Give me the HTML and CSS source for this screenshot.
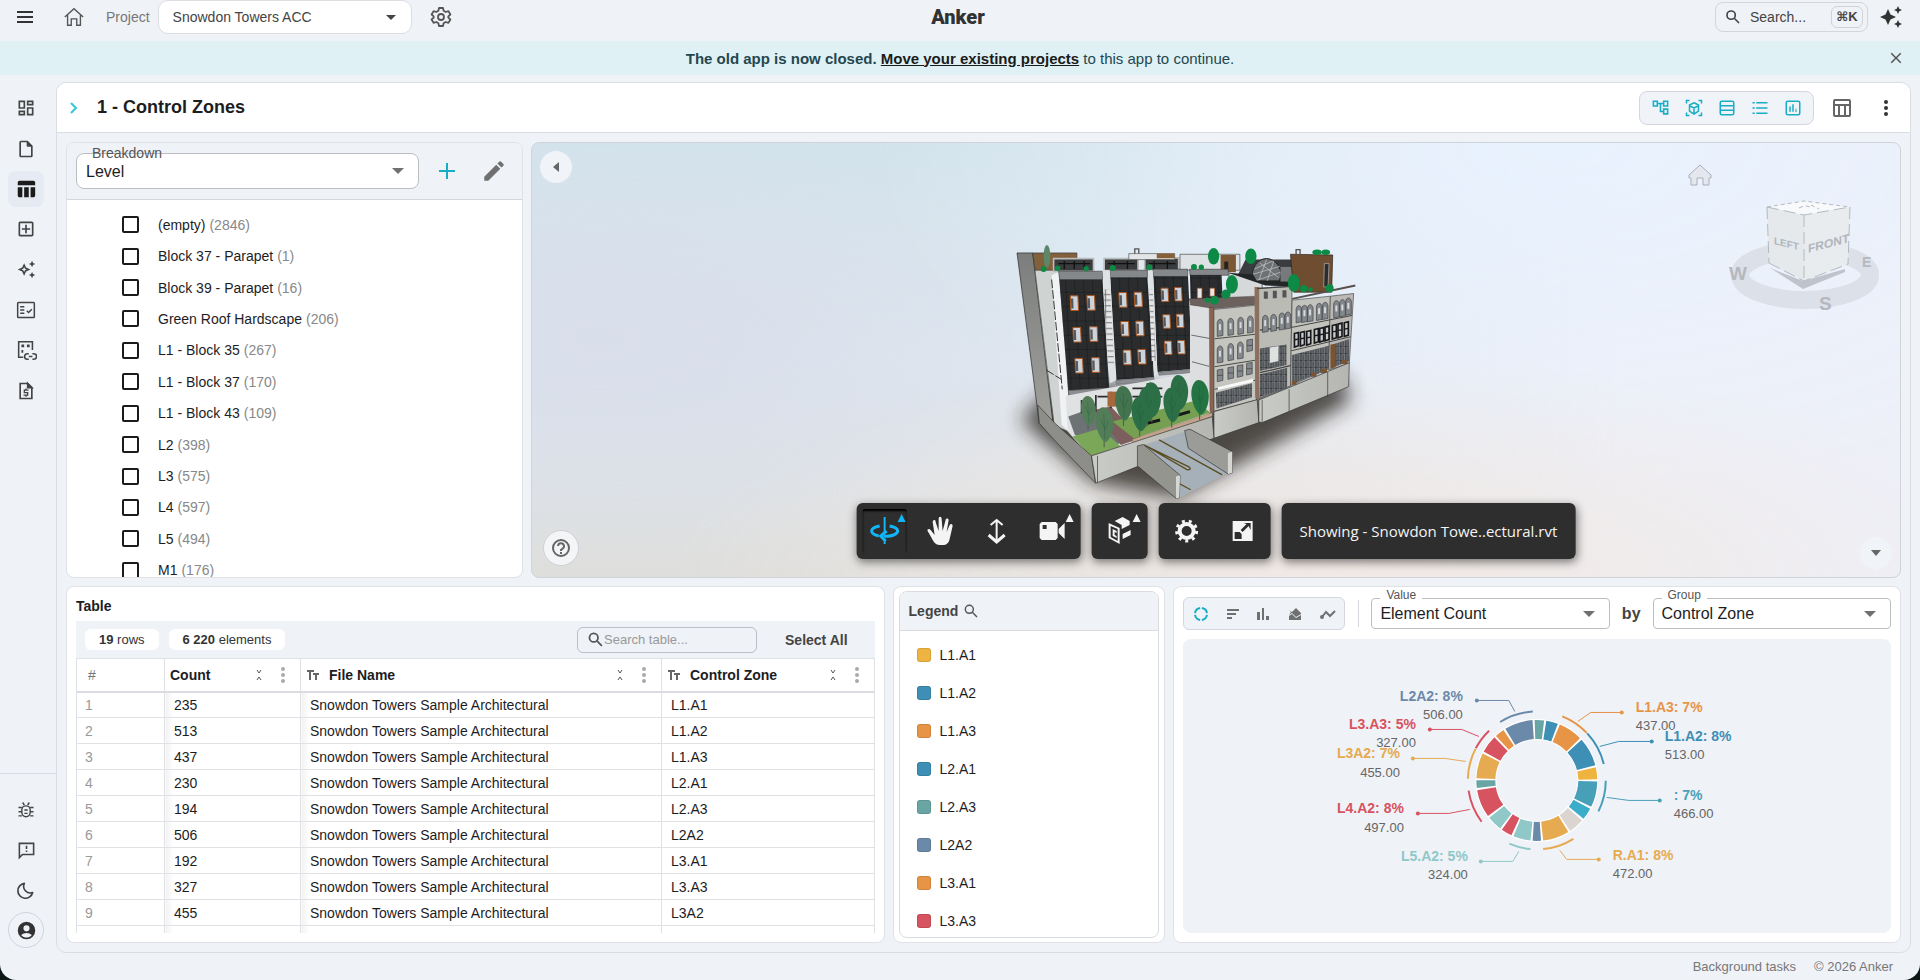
FILE: index.html
```html
<!DOCTYPE html>
<html lang="en">

<head>
    <meta charset="utf-8">
    <title>Anker - Control Zones</title>
    <link rel="stylesheet" href="styles.css">
</head>

<body>
    <header class="topbar">
        <div class="topbar-side">
            <button class="icon-btn menu-btn" aria-label="Menu"><svg width="24" height="24" viewBox="0 0 24 24"><path d="M4 6h16v2H4zM4 11h16v2H4zM4 16h16v2H4z"/></svg></button>
            <a href="#" class="icon-btn home-link" aria-label="Home"><svg width="22" height="22" viewBox="0 0 24 24" fill="none" stroke="currentColor" stroke-width="1.5"><path d="M2 12 12 3l10 9M5 10v11h4v-7h6v7h4V10"/></svg></a>
            <label class="project-label" for="project">Project</label>
            <span class="select project-select">
                <select id="project"><option>Snowdon Towers ACC</option></select>
            </span>
            <button class="icon-btn gear-btn" aria-label="Project settings"><svg width="24" height="24" viewBox="0 0 24 24" fill="none" stroke="currentColor" stroke-width="1.8" stroke-linejoin="round"><path d="M10 3h4l.6 2.8 2.1 1.2 2.7-.9 2 3.4-2.1 1.9v1.2l2.1 1.9-2 3.4-2.7-.9-2.1 1.2L14 21h-4l-.6-2.8L7.3 17l-2.7.9-2-3.4 2.1-1.9v-1.2L2.6 9.5l2-3.4 2.7.9 2.1-1.2z"/><circle cx="12" cy="12" r="3"/></svg></button>
        </div>
        <a href="#" class="logo">Anker</a>
        <div class="topbar-side topbar-right">
            <button class="search-btn">
                <svg width="18" height="18" viewBox="0 0 24 24" fill="none" stroke="currentColor" stroke-width="2.2"><circle cx="9.5" cy="9.5" r="5.5"/><path d="M14 14l6 6"/></svg>
                <span>Search...</span>
                <kbd>⌘K</kbd>
            </button>
            <button class="icon-btn" aria-label="Assistant"><svg width="24" height="24" viewBox="0 0 24 24"><path d="m19 9 1.25-2.75L23 5l-2.75-1.25L19 1l-1.25 2.75L15 5l2.75 1.25zm0 6-1.25 2.75L15 19l2.75 1.25L19 23l1.25-2.75L23 19l-2.75-1.25zM11.5 9.5 9 4 6.5 9.5 1 12l5.5 2.5L9 20l2.5-5.5L17 12z"/></svg></button>
        </div>
    </header>

    <div class="banner">
        <p><b>The old app is now closed. <a href="#">Move your existing projects</a></b> to this app to continue.</p>
        <button class="icon-btn" aria-label="Close"><svg width="18" height="18" viewBox="0 0 24 24"><path d="M19 6.41 17.59 5 12 10.59 6.41 5 5 6.41 10.59 12 5 17.59 6.41 19 12 13.41 17.59 19 19 17.59 13.41 12z"/></svg></button>
    </div>

    <div class="layout">
        <aside class="sidebar">
            <nav class="nav-main">
                <a href="#" aria-label="Dashboard"><svg width="20" height="20" viewBox="0 0 24 24"><path d="M19 5v2h-4V5h4M9 5v6H5V5h4m10 8v6h-4v-6h4M9 17v2H5v-2h4M21 3h-8v6h8V3zM11 3H3v10h8V3zm10 8h-8v10h8V11zm-10 4H3v6h8v-6z"/></svg></a>
                <a href="#" aria-label="Files"><svg width="20" height="20" viewBox="0 0 24 24"><path d="M14 2H6c-1.1 0-2 .9-2 2v16c0 1.1.9 2 2 2h12c1.1 0 2-.9 2-2V8zM6 20V4h7v4l1 1h4v11z"/><path d="M13 3v6h6z"/></svg></a>
                <a href="#" class="active" aria-label="Zones"><svg width="22" height="22" viewBox="0 0 24 24"><path d="M10 10h5v11h-5zM17 21h3c1.1 0 2-.9 2-2v-9h-5zM20 3H5c-1.1 0-2 .9-2 2v3h19V5c0-1.1-.9-2-2-2zM3 19c0 1.1.9 2 2 2h3V10H3z"/></svg></a>
                <a href="#" aria-label="Add"><svg width="20" height="20" viewBox="0 0 24 24"><path d="M19 3H5a2 2 0 0 0-2 2v14c0 1.1.9 2 2 2h14c1.1 0 2-.9 2-2V5c0-1.1-.9-2-2-2zm0 16H5V5h14zm-8-2h2v-4h4v-2h-4V7h-2v4H7v2h4z"/></svg></a>
                <a href="#" aria-label="Assistant"><svg width="19" height="19" viewBox="0 0 24 24"><path d="m19 9 1.25-2.75L23 5l-2.75-1.25L19 1l-1.25 2.75L15 5l2.75 1.25zm0 6-1.25 2.75L15 19l2.75 1.25L19 23l1.25-2.75L23 19l-2.75-1.25zM11.5 9.5 9 4 6.5 9.5 1 12l5.5 2.5L9 20l2.5-5.5L17 12zm-1.51 3.49L9 15.17l-.99-2.18L5.83 12l2.18-.99L9 8.83l.99 2.18 2.18.99z"/></svg></a>
                <a href="#" aria-label="Checks"><svg width="20" height="20" viewBox="0 0 24 24" fill="none" stroke="currentColor" stroke-width="1.8"><rect x="2" y="3" width="20" height="18" rx="1"/><path d="M5 8h5M5 12h5M5 16h5M13 13l2 2 4-4"/></svg></a>
                <a href="#" aria-label="Linked data"><svg width="22" height="22" viewBox="0 0 24 24" fill="none" stroke="currentColor" stroke-width="1.7"><path d="M9 20H4V3h15v9"/><path d="M15 22h-1.5a3 3 0 0 1 0-6H15M19 16h1.5a3 3 0 0 1 0 6H19M15 19h4"/><path d="M7 6h3v3H7zM13 6h3v3h-3zM7 12h2v3H7z" fill="currentColor" stroke="none"/></svg></a>
                <a href="#" aria-label="Costs"><svg width="20" height="20" viewBox="0 0 24 24" fill="none" stroke="currentColor" stroke-width="2"><path d="M5 3h9l5 5v13H5z"/><path d="M14 3v5h5z" fill="currentColor"/><path d="M15 11h-5v3h4v3H9M12 9v2M12 17v2" stroke-width="1.6"/></svg></a>
            </nav>
            <nav class="nav-bottom">
                <a href="#" aria-label="Report a bug"><svg width="20" height="20" viewBox="0 0 24 24" fill="none" stroke="currentColor" stroke-width="1.7"><rect x="7" y="7" width="10" height="13" rx="5"/><path d="M8 3l2 3M16 3l-2 3M3 9h4M3 14h4M3 19h4M17 9h4M17 14h4M17 19h4M10 12h4M10 16h4"/></svg></a>
                <a href="#" aria-label="Feedback"><svg width="19" height="19" viewBox="0 0 24 24" fill="none" stroke="currentColor" stroke-width="2"><path d="M3 21V3h18v14H7z"/><path d="M12 6v4M12 12v2"/></svg></a>
                <a href="#" aria-label="Dark mode"><svg width="20" height="20" viewBox="0 0 24 24" fill="none" stroke="currentColor" stroke-width="2" stroke-linejoin="round"><path d="M10 4a8 8 0 0 0 10 11A9 9 0 1 1 10 4z"/></svg></a>
                <a href="#" class="account" aria-label="Account"><svg width="21" height="21" viewBox="0 0 24 24"><path d="M12 2a10 10 0 1 0 0 20 10 10 0 0 0 0-20zm0 4a3.5 3.5 0 1 1 0 7 3.5 3.5 0 0 1 0-7zm0 14c-2.03 0-4.43-.82-6.14-2.88a9.9 9.9 0 0 1 12.28 0C16.43 19.18 14.03 20 12 20z"/></svg></a>
            </nav>
        </aside>

        <div class="content">
            <main class="workspace">
                <div class="page-head">
                    <button class="icon-btn expand" aria-label="Expand"><svg width="10" height="14" viewBox="0 0 10 14" fill="none" stroke="currentColor" stroke-width="2"><path d="M2 2l5 5-5 5"/></svg></button>
                    <h1>1 - Control Zones</h1>
                    <div class="view-tools">
                        <button aria-label="Tree"><svg width="19" height="19" viewBox="0 0 24 24"><path d="M22 11V3h-7v3H9V3H2v8h7V8h2v10h4v3h7v-8h-7v3h-2V8h2v3h7zM7 9H4V5h3v4zm10 6h3v4h-3v-4zm0-10h3v4h-3V5z"/></svg></button>
                        <button aria-label="Model"><svg width="18" height="18" viewBox="0 0 24 24" fill="none" stroke="currentColor" stroke-width="2"><path d="M2 6V2h4M18 2h4v4M22 18v4h-4M6 22H2v-4"/><path d="M12 5l6 3v8l-6 4-6-4V8zM6 9l6 3 6-3M12 12v7"/></svg></button>
                        <button aria-label="Table"><svg width="18" height="18" viewBox="0 0 24 24" fill="none" stroke="currentColor" stroke-width="2"><rect x="3" y="3" width="18" height="18" rx="2"/><path d="M3 9h18M3 15h18"/></svg></button>
                        <button aria-label="Legend"><svg width="18" height="18" viewBox="0 0 24 24"><path d="M2 4h3v2H2zM2 11h3v2H2zM2 18h3v2H2zM7 4h15v2H7zM7 11h15v2H7zM7 18h15v2H7z"/></svg></button>
                        <button aria-label="Chart"><svg width="18" height="18" viewBox="0 0 24 24" fill="none" stroke="currentColor" stroke-width="2"><rect x="3" y="3" width="18" height="18" rx="2"/><path d="M8 10v7M12 7v10M16 13v1M16 15v2"/></svg></button>
                    </div>
                    <button class="icon-btn layout-btn" aria-label="Columns"><svg width="20" height="20" viewBox="0 0 20 20" fill="none" stroke="currentColor" stroke-width="2"><rect x="2" y="2" width="16" height="16" rx="1"/><path d="M2 7h16M7 7v11M13 7v11"/></svg></button>
                    <button class="icon-btn more-btn" aria-label="More"><svg width="24" height="24" viewBox="0 0 24 24"><circle cx="12" cy="6" r="2"/><circle cx="12" cy="12" r="2"/><circle cx="12" cy="18" r="2"/></svg></button>
                </div>

                <div class="panels">
                    <div class="row row-top">
                        <section class="panel breakdown">
                            <div class="breakdown-head">
                                <span class="select field breakdown-field">
                                    <label for="breakdown">Breakdown</label>
                                    <select id="breakdown"><option>Level</option></select>
                                </span>
                                <button class="icon-btn add-btn" aria-label="Add"><svg width="18" height="18" viewBox="0 0 18 18"><path d="M8 1h2v7h7v2h-7v7H8v-7H1V8h7z"/></svg></button>
                                <button class="icon-btn" aria-label="Edit"><svg width="26" height="26" viewBox="0 0 24 24"><path d="M3 17.25V21h3.75L17.81 9.94l-3.75-3.75zM20.71 7.04a1 1 0 0 0 0-1.41l-2.34-2.34a1 1 0 0 0-1.41 0l-1.83 1.83 3.75 3.75z"/></svg></button>
                            </div>
                            <div class="levels">
                                <label><input type="checkbox">(empty) <span>(2846)</span></label>
                                <label><input type="checkbox">Block 37 - Parapet <span>(1)</span></label>
                                <label><input type="checkbox">Block 39 - Parapet <span>(16)</span></label>
                                <label><input type="checkbox">Green Roof Hardscape <span>(206)</span></label>
                                <label><input type="checkbox">L1 - Block 35 <span>(267)</span></label>
                                <label><input type="checkbox">L1 - Block 37 <span>(170)</span></label>
                                <label><input type="checkbox">L1 - Block 43 <span>(109)</span></label>
                                <label><input type="checkbox">L2 <span>(398)</span></label>
                                <label><input type="checkbox">L3 <span>(575)</span></label>
                                <label><input type="checkbox">L4 <span>(597)</span></label>
                                <label><input type="checkbox">L5 <span>(494)</span></label>
                                <label><input type="checkbox">M1 <span>(176)</span></label>
                            </div>
                        </section>

                        <section class="viewer">
                            <svg class="scene" viewBox="0 0 1371 436" preserveAspectRatio="xMidYMid slice">
                                <defs>
                                    <filter id="soft" x="-20%" y="-20%" width="140%" height="150%"><feGaussianBlur stdDeviation="30"/></filter>
                                    <linearGradient id="side" x1="0" y1="0" x2="0" y2="1"><stop offset="0" stop-color="#7c7e7d"/><stop offset="1" stop-color="#a3a49f"/></linearGradient>
                                    <linearGradient id="base" x1="0" y1="0" x2="1" y2="0"><stop offset="0" stop-color="#c9ccc6"/><stop offset="1" stop-color="#b5b5b2"/></linearGradient>
                                    <pattern id="cladding" width="27" height="43" patternUnits="userSpaceOnUse" patternTransform="skewX(3)"><rect width="27" height="43" fill="#2b2c2e"/><path d="M0 0h27M0 0v43" stroke="#0d0d0e" stroke-width="2"/></pattern>
                                    <pattern id="ladder" width="30" height="17" patternUnits="userSpaceOnUse"><rect width="30" height="17" fill="#e4e6e8"/><path d="M0 2h30M14 2v15" stroke="#333" stroke-width="2"/></pattern>
                                    <pattern id="glazing" width="15" height="21" patternUnits="userSpaceOnUse"><rect width="15" height="21" fill="#85898d"/><path d="M0 0h15M2 0v21M9 4v17" stroke="#202224" stroke-width="3"/></pattern>
                                    <g id="win"><path d="M0 0h23l2 44H2z" fill="#cdd3da" stroke="#a9541d" stroke-width="3"/><path d="M2 8h7l1 30H3z" fill="#55585d"/></g>
                                    <g id="arch"><path d="M0 12c2-14 15-14 17 0v38l-17 3z" fill="#83888c" stroke="#3c3d3f" stroke-width="2"/><path d="M5 16h6v18H5z" fill="#d7dadc"/></g>
                                    <g id="pane"><path d="M0 2l17-3v34L0 37z" fill="#83888c" stroke="#3c3d3f" stroke-width="2"/><path d="M0 18h17" stroke="#3c3d3f" stroke-width="2"/></g>
                                    <g id="dark"><path d="M0 3l12-3v40L0 44z" fill="#c9cdd0" stroke="#17181a" stroke-width="5"/><path d="M0 22l12-2" stroke="#17181a" stroke-width="4"/></g>
                                    <g id="tree"><path d="M23 60v60" stroke="#4c5b46" stroke-width="3"/><path d="M20 0c22 0 36 38 29 66-4 22-14 38-23 38S-2 70-2 40C-2 18 8 0 20 0z"/><path d="M22 20l3 75M13 38l11 24M36 40L25 68" stroke="#1f5137" stroke-width="1" fill="none"/></g>
                                </defs>
                                <g transform="translate(450 78) scale(.3333)">
                                    <path d="M120 600l220 190 250 45 180-100 340-190-20-80-260 60-600-40z" fill="#26231f" opacity=".8" filter="url(#soft)"/>
                                    <!-- left facade -->
                                    <path d="M108 98h47l67 560-47-48z" fill="url(#side)" stroke="#222" stroke-width="2"/>
                                    <path d="M155 98h133v55H163z" fill="#82603c" stroke="#333" stroke-width="2"/>
                                    <path d="M162 150h73l27 485-42-18z" fill="#cfd3d2" stroke="#444" stroke-width="2"/>
                                    <path d="M212 165l22-10 28 370v110l-20-22z" fill="#f0f2f3"/>
                                    <path d="M212 178l32 330M196 450l45 28" stroke="#333" stroke-width="3" stroke-dasharray="26 6" fill="none"/>
                                    <!-- roof level -->
                                    <path d="M218 115h120v38H218zM370 115h102v36H370zM492 113h102v37H492z" fill="#3a3b3d" stroke="#b9bcbd" stroke-width="5"/>
                                    <path d="M232 130h95M382 130h80M504 130h80M250 122v24M280 122v24M310 122v24M400 122v24M440 122v24M520 122v24M560 122v24" stroke="#111" stroke-width="4"/>
                                    <path d="M444 100h138v18H444z" fill="#e3e6e8" stroke="#555" stroke-width="2"/>
                                    <path d="M528 100h54v14h-54z" fill="#85603b"/>
                                    <path d="M598 102h180v48H598z" fill="#dfe2e4" stroke="#444" stroke-width="2"/>
                                    <path d="M720 104h46v52h-46z" fill="#7b5836"/>
                                    <path d="M731 124h12v30h-12z" fill="#222"/>
                                    <path d="M795 118h165v70H760z" fill="#3b3c3e"/>
                                    <path d="M745 158l100 20v55l-100 8z" fill="#d6d9da" stroke="#333" stroke-width="2"/>
                                    <path d="M745 158l170 10 20 30-80-2z" fill="#242527"/>
                                    <path d="M815 160c10-60 75-60 88 0l-6 22h-70z" fill="#6d7174" stroke="#222" stroke-width="3"/>
                                    <path d="M822 146l56-24M818 162l80-24M830 180l70-24M838 128l56 44M858 118l-22 60M880 122l-20 60" stroke="#c9cbcc" stroke-width="2"/>
                                    <path d="M900 140h60v44h-60z" fill="#77797c"/>
                                    <path d="M930 102l127 2-3 112H940z" fill="#6f4d31" stroke="#2b221a" stroke-width="2"/>
                                    <path d="M1032 130h14l-3 70h-13z" fill="#2c2c2c" stroke="#bbb" stroke-width="2"/>
                                    <path d="M462 100v-14h12v14M947 102V88h12v14" fill="none" stroke="#555" stroke-width="4"/>
                                    <!-- dark cladding blocks -->
                                    <path d="M233 153h132v25H236zM387 150h113v22H388zM515 147h106v22H518zM627 147h116v18H628z" fill="#85888b" stroke="#444" stroke-width="2"/>
                                    <path d="M235 178h130l20 325-123 8z" fill="url(#cladding)"/>
                                    <path d="M388 172h112l20 300-115 8z" fill="url(#cladding)"/>
                                    <path d="M518 168h104l13 279-105 9z" fill="url(#cladding)"/>
                                    <path d="M628 164h95l3 72-96 8z" fill="url(#cladding)"/>
                                    <path d="M262 512l122-8v13l-120 9zM405 481l115-9v12l-114 9zM532 457l103-10v11l-100 8z" fill="#8b8d90" stroke="#444"/>
                                    <path d="M365 150h22l20 330-20 10z" fill="#dfe2e4"/>
                                    <path d="M368 208h20l12 225h-18z" fill="url(#ladder)"/>
                                    <path d="M502 150h14l14 310-10 10z" fill="#dfe2e4"/>
                                    <path d="M505 208h11l9 215h-12z" fill="url(#ladder)"/>
                                    <use href="#win" x="268" y="227"/><use href="#win" x="318" y="226"/><use href="#win" x="276" y="322"/><use href="#win" x="326" y="320"/><use href="#win" x="282" y="415"/><use href="#win" x="332" y="413"/>
                                    <use href="#win" x="414" y="217"/><use href="#win" x="460" y="216"/><use href="#win" x="420" y="304"/><use href="#win" x="465" y="303"/><use href="#win" x="427" y="390"/><use href="#win" x="471" y="388"/>
                                    <g transform="translate(22 6) scale(.92)"><use href="#win" x="564" y="215"/><use href="#win" x="608" y="213"/><use href="#win" x="570" y="302"/><use href="#win" x="614" y="300"/><use href="#win" x="575" y="388"/><use href="#win" x="618" y="386"/></g>
                                    <path d="M650 204h14v30h-14zM688 204h14v24h-14z" fill="#e4e8ec" stroke="#b3581c" stroke-width="2"/>
                                    <!-- ground floor and courtyard -->
                                    <path d="M255 527l375-68 65 115-90 60-280 75-65-75z" fill="#dfe1e2"/>
                                    <path d="M262 590l70-25 130 90-60 20-120-30z" fill="#6d7375"/>
                                    <path d="M340 570l50-10 90 95-60 20z" fill="#7c5f5c"/>
                                    <path d="M275 650l85-25 60 55-90 30z" fill="#7aa758"/>
                                    <path d="M395 605l245-62 50 35-230 78z" fill="#75a052"/>
                                    <path d="M302 540v40M345 525v50M390 515v50M350 530h40M455 505h90M455 530h90M500 490v80" stroke="#2d2d2f" stroke-width="5"/>
                                    <path d="M380 515h30v45h-30z" fill="#a5673c"/>
                                    <path d="M455 658l240-80v12l-240 82zM330 708l70-22 60-18v12l-120 38z" fill="#c2a48a" stroke="#6b5745"/>
                                    <path d="M500 610l38-10M592 585l36-10" stroke="#17181a" stroke-width="9"/>
                                    <!-- white wall and brick column -->
                                    <path d="M628 253l60 8v310l-60-30z" fill="#dcdee0"/>
                                    <path d="M628 253l70 8M632 345l55 10M634 425l52 14" stroke="#333" stroke-width="2"/>
                                    <path d="M625 236l200-8 12 24-135 14-72-12z" fill="#6d615e" stroke="#333"/>
                                    <path d="M686 262h14v320l-12-8z" fill="#8a6353" stroke="#4b332b"/>
                                    <!-- classic facades -->
                                    <path d="M700 268l128-13v285l-128 34z" fill="#c5c5bf" stroke="#444" stroke-width="2"/>
                                    <path d="M702 356l126-14M702 440l126-20M702 508l126-28" stroke="#4a4a48" stroke-width="3"/>
                                    <use href="#arch" x="710" y="296"/><use href="#arch" x="742" y="293"/><use href="#arch" x="772" y="290"/><use href="#arch" x="801" y="286"/>
                                    <use href="#arch" x="710" y="376"/><use href="#arch" x="742" y="369"/><use href="#arch" x="771" y="364"/><use href="#pane" x="799" y="358"/>
                                    <use href="#pane" x="710" y="448"/><use href="#pane" x="742" y="441"/><use href="#pane" x="770" y="435"/><use href="#pane" x="798" y="428"/>
                                    <path d="M706 518l108-28v42l-106 34z" fill="url(#glazing)"/>
                                    <path d="M712 502l106-26v10l-106 24z" fill="#f7f8f8"/>
                                    <path d="M830 204l105-6-5 300-95 37z" fill="#bbbbb5" stroke="#444" stroke-width="2"/>
                                    <path d="M822 200h14v335h-12z" fill="#8b705f"/>
                                    <path d="M838 330l95-12M838 458l95-22M830 205l105-7" stroke="#444" stroke-width="4"/>
                                    <path d="M850 214h12v22h-12zM877 212h12v22h-12zM906 210h12v22h-12z" fill="#555"/>
                                    <use href="#arch" x="846" y="284"/><use href="#arch" x="871" y="281"/><use href="#arch" x="896" y="277"/><use href="#arch" x="914" y="274"/>
                                    <path d="M838 385l80-12v62l-80 18z" fill="url(#glazing)"/>
                                    <path d="M868 382l26-4v45l-26 6z" fill="#dfe1e0"/>
                                    <path d="M838 463l82-20v60l-82 28z" fill="url(#glazing)"/>
                                    <path d="M935 240l115-12-5 218-115 50z" fill="#c3c3be" stroke="#444" stroke-width="2"/>
                                    <path d="M1050 228l70-8-13 210-62 20z" fill="#bab9b5" stroke="#444" stroke-width="2"/>
                                    <path d="M935 236l190-40" stroke="#55504c" stroke-width="6"/>
                                    <use href="#arch" x="947" y="255"/><use href="#arch" x="964" y="254"/><use href="#arch" x="981" y="252"/><use href="#arch" x="1008" y="248"/><use href="#arch" x="1026" y="245"/><use href="#arch" x="1060" y="240"/><use href="#arch" x="1078" y="237"/><use href="#arch" x="1096" y="232"/>
                                    <path d="M933 322l182-36M933 392l178-42" stroke="#444" stroke-width="3"/>
                                    <use href="#dark" x="942" y="337"/><use href="#dark" x="960" y="334"/><use href="#dark" x="979" y="331"/><use href="#dark" x="1002" y="325"/><use href="#dark" x="1018" y="322"/><use href="#dark" x="1034" y="318"/><use href="#dark" x="1056" y="313"/><use href="#dark" x="1073" y="309"/><use href="#dark" x="1092" y="305"/>
                                    <path d="M934 405l112-28v70l-112 45zM1052 375l55-18v66l-55 22z" fill="url(#glazing)"/>
                                    <path d="M1050 374l16-3v70l-16 6zM934 482h14v12h-14zM992 458h16v12h-16zM1022 446h18v14h-18zM1084 420h18v12h-18z" fill="#7a5332"/>
                                    <!-- plinth -->
                                    <path d="M700 575l130-36 5 69-135 47z" fill="url(#base)" stroke="#333" stroke-width="2"/>
                                    <path d="M835 540l272-112-2 72-260 108-10-2z" fill="url(#base)" stroke="#333" stroke-width="2"/>
                                    <path d="M845 540v66M926 508v66M1042 456v74" stroke="#333" stroke-width="2"/>
                                    <path d="M170 555l52 55 110 98 12 82-126-132-43-48z" fill="#8d8e89" stroke="#333" stroke-width="2"/>
                                    <path d="M332 708l363-118 5 65-230 85-125 50z" fill="url(#base)" stroke="#333" stroke-width="2"/>
                                    <path d="M350 708v80" stroke="#333" stroke-width="2"/>
                                    <!-- ramp -->
                                    <path d="M475 680l140-45 135 120-155 80z" fill="#a6b0b8"/>
                                    <path d="M535 660l190 105M490 675l130 75q14 0 6-8L500 680M520 750l110 60" fill="none" stroke="#5b4d23" stroke-width="4"/>
                                    <path d="M612 632l16-4 127 67v64l-12 4-120-78z" fill="#9b9c98" stroke="#333" stroke-width="2"/>
                                    <path d="M742 700l13-5v64l-13 4z" fill="#d5d7d3"/>
                                    <path d="M470 678l18-4 110 92-2 68-10 2-116-98z" fill="#94958f" stroke="#333" stroke-width="2"/>
                                    <path d="M586 770l12-4-2 68-10 2z" fill="#d5d7d3"/>
                                    <!-- planting -->
                                    <g fill="#2c6f47">
                                        <use href="#tree" x="405" y="498" fill="#44744f"/><use href="#tree" x="490" y="487"/><use href="#tree" x="572" y="465"/><use href="#tree" x="476" y="500"/>
                                        <use href="#tree" x="550" y="503"/><use href="#tree" x="454" y="530"/><use href="#tree" x="634" y="480" fill="#237343"/>
                                        <g fill="#527d58"><use href="#tree" x="347" y="562"/><use href="#tree" transform="translate(302 528) scale(.85)"/></g>
                                    </g>
                                    <g fill="#0d8a45">
                                        <ellipse cx="699" cy="108" rx="17" ry="25"/><ellipse cx="811" cy="108" rx="17" ry="23"/><ellipse cx="754" cy="192" rx="18" ry="28"/><ellipse cx="940" cy="188" rx="18" ry="27"/>
                                        <circle cx="736" cy="222" r="14"/><circle cx="702" cy="240" r="13"/><circle cx="680" cy="240" r="8"/><circle cx="970" cy="205" r="11"/><circle cx="990" cy="208" r="7"/><circle cx="1048" cy="204" r="12"/><ellipse cx="1010" cy="96" rx="14" ry="8"/><ellipse cx="1036" cy="96" rx="13" ry="8"/>
                                        <circle cx="640" cy="140" r="9"/><circle cx="662" cy="141" r="8"/><circle cx="396" cy="143" r="9"/><circle cx="506" cy="141" r="9"/><circle cx="316" cy="145" r="8"/><circle cx="230" cy="144" r="8"/><circle cx="188" cy="146" r="9"/>
                                    </g>
                                    <ellipse cx="198" cy="108" rx="10" ry="34" fill="#5d8867"/>
                                </g>
                            </svg>

                            <button class="round-btn collapse-left" aria-label="Collapse"><svg width="8" height="10" viewBox="0 0 8 10"><path d="M7 0v10L1 5z"/></svg></button>
                            <button class="round-btn help-btn" aria-label="Help"><svg width="20" height="20" viewBox="0 0 20 20" fill="none" stroke="currentColor" stroke-width="2"><circle cx="10" cy="10" r="8"/><path d="M7 8a3 3 0 1 1 4 3l-1 1v1M10 14v2"/></svg></button>
                            <button class="round-btn collapse-down" aria-label="Collapse"><svg width="10" height="6" viewBox="0 0 10 6"><path d="M0 0h10L5 6z"/></svg></button>

                            <svg class="viewcube" width="160" height="160" viewBox="0 0 160 160">
                                <path d="M-38 20l11-10 11 10v3h-2v7h-6v-7h-6v7h-6v-7h-2z" fill="#e4e8ee" stroke="#a9afba" stroke-width="1"/>
                                <ellipse cx="78" cy="120" rx="65" ry="25" fill="none" stroke="#dce0e8" stroke-width="18"/>
                                <text x="2" y="125" class="compass">W</text>
                                <text x="92" y="155" class="compass">S</text>
                                <text x="135" y="112" class="compass compass-small">E</text>
                                <path d="M43 113l33 21 42-17v-3L76 126z" fill="#bfc4cc"/>
                                <path d="M40 52l37-6 46 6-46 8z" fill="#f7f9fb"/>
                                <path d="M40 52l37 8v66l-35-18z" fill="#e5e9ec"/>
                                <path d="M77 60l46-8-2 57-44 17z" fill="#e9ecef"/>
                                <path d="M40 52l37 8 46-8M77 60v66M40 52l2 56M123 52l-2 57M42 108l35 18 44-17" fill="none" stroke="#b3b9c2" stroke-width="1" stroke-dasharray="12 5"/>
                                <path d="M40 52l37-6 46 6M72 53q8-4 12 0M84 50l8 4" fill="none" stroke="#b3b9c2" stroke-width="1" stroke-dasharray="4 3"/>
                                <text transform="translate(47 89) skewY(14)" class="face face-left">LEFT</text>
                                <text transform="translate(81 98) skewY(-15)" class="face">FRONT</text>
                            </svg>

                            <div class="viewer-tools">
                                <div class="tool-group">
                                    <button class="selected" aria-label="Orbit"><svg width="34" height="34" viewBox="0 0 34 34" fill="none" stroke="currentColor" stroke-width="3"><path d="M17 3v15M17 25v5" stroke-width="2"/><path d="M12 12c-5 1-8 3-8 5 0 2 3 4 7 5M22 12c5 1 8 3 8 5 0 3-6 6-14 5"/><path d="M19 17l-6 5 5 5"/></svg><i></i></button>
                                    <button aria-label="Pan"><svg width="28" height="30" viewBox="0 0 28 30"><path d="M13 29c-4 0-6-3-8-7l-4-7c-1-2 2-3 3-1l4 5L6 6c0-2 3-3 3 0l3 9V3c0-3 3-3 3 0l1 12 3-11c0-2 3-2 3 0l-2 12 3-7c1-2 3-1 3 1l-3 13c-1 4-3 6-7 6z"/></svg></button>
                                    <button aria-label="Dolly"><svg width="20" height="28" viewBox="0 0 20 28" fill="none" stroke="currentColor" stroke-width="2"><path d="M10 4v21M4 8l6-5 6 5"/><path d="M2 18l8 7 8-7" stroke-width="3"/></svg></button>
                                    <button aria-label="Camera"><svg width="28" height="20" viewBox="0 0 28 20"><path d="M3 1h14l2 2v14l-2 2H3l-2-2V3zm1 3v4h4V4zM20 8l6-6v16l-6-6z" fill-rule="evenodd"/></svg><i></i></button>
                                </div>
                                <div class="tool-group">
                                    <button aria-label="Section"><svg width="24" height="28" viewBox="0 0 24 28"><path d="M1 6l11 5v16L1 21zm2 3v11l7 4V12z" fill-rule="evenodd"/><path d="M5 12l4 2v2l-2-1v3l2 1v2l-4-2zM7 4l8-4 7 4v4l-8 4v-4zM15 17l8-4v5l-8 4z"/></svg><i></i></button>
                                </div>
                                <div class="tool-group">
                                    <button aria-label="Settings"><svg width="26" height="26" viewBox="0 0 26 26" fill="none" stroke="currentColor"><circle cx="13" cy="13" r="7" stroke-width="4"/><circle cx="13" cy="13" r="10" stroke-width="3" stroke-dasharray="3 4"/></svg></button>
                                    <button aria-label="Full screen"><svg width="22" height="22" viewBox="0 0 22 22"><path d="M1 1h20v20H1zM12 3l3 1-6 6 2 2 6-6 2 4V3zM3 12v7h7v-5l-2-2z" fill-rule="evenodd"/></svg></button>
                                </div>
                                <div class="tool-group status">Showing - Snowdon Towe..ectural.rvt</div>
                            </div>
                        </section>
                    </div>

                    <div class="row row-bottom">
                        <section class="panel table-panel">
                            <h2>Table</h2>
                            <div class="table-tools">
                                <span class="chip"><b>19</b> rows</span>
                                <span class="chip"><b>6 220</b> elements</span>
                                <label class="table-search">
                                    <svg width="17" height="17" viewBox="0 0 24 24" fill="none" stroke="currentColor" stroke-width="2.5"><circle cx="9.5" cy="9.5" r="6"/><path d="M14 14l7 7"/></svg>
                                    <input type="text" placeholder="Search table..." aria-label="Search table">
                                </label>
                                <button class="select-all">Select All</button>
                            </div>
                            <div class="table-wrap">
                                <table>
                                    <colgroup><col class="col-num"><col class="col-count"><col class="col-file"><col></colgroup>
                                    <thead>
                                        <tr>
                                            <th class="num">#</th>
                                            <th><div class="th-cell"><span>Count</span><svg class="sort" width="6" height="12" viewBox="0 0 6 12"><path d="M1 1l2 3 2-3M1 11l2-3 2 3"/></svg><svg class="dots" width="4" height="16" viewBox="0 0 4 16"><circle cx="2" cy="2" r="2"/><circle cx="2" cy="8" r="2"/><circle cx="2" cy="14" r="2"/></svg></div></th>
                                            <th><div class="th-cell"><svg class="tt" width="12" height="10" viewBox="0 0 12 10"><path d="M0 1h7M3 1v9M6 4h6M9 4v6"/></svg><span>File Name</span><svg class="sort" width="6" height="12" viewBox="0 0 6 12"><path d="M1 1l2 3 2-3M1 11l2-3 2 3"/></svg><svg class="dots" width="4" height="16" viewBox="0 0 4 16"><circle cx="2" cy="2" r="2"/><circle cx="2" cy="8" r="2"/><circle cx="2" cy="14" r="2"/></svg></div></th>
                                            <th><div class="th-cell"><svg class="tt" width="12" height="10" viewBox="0 0 12 10"><path d="M0 1h7M3 1v9M6 4h6M9 4v6"/></svg><span>Control Zone</span><svg class="sort" width="6" height="12" viewBox="0 0 6 12"><path d="M1 1l2 3 2-3M1 11l2-3 2 3"/></svg><svg class="dots" width="4" height="16" viewBox="0 0 4 16"><circle cx="2" cy="2" r="2"/><circle cx="2" cy="8" r="2"/><circle cx="2" cy="14" r="2"/></svg></div></th>
                                        </tr>
                                    </thead>
                                    <tbody>
                                        <tr><td>1</td><td>235</td><td>Snowdon Towers Sample Architectural</td><td>L1.A1</td></tr>
                                        <tr><td>2</td><td>513</td><td>Snowdon Towers Sample Architectural</td><td>L1.A2</td></tr>
                                        <tr><td>3</td><td>437</td><td>Snowdon Towers Sample Architectural</td><td>L1.A3</td></tr>
                                        <tr><td>4</td><td>230</td><td>Snowdon Towers Sample Architectural</td><td>L2.A1</td></tr>
                                        <tr><td>5</td><td>194</td><td>Snowdon Towers Sample Architectural</td><td>L2.A3</td></tr>
                                        <tr><td>6</td><td>506</td><td>Snowdon Towers Sample Architectural</td><td>L2A2</td></tr>
                                        <tr><td>7</td><td>192</td><td>Snowdon Towers Sample Architectural</td><td>L3.A1</td></tr>
                                        <tr><td>8</td><td>327</td><td>Snowdon Towers Sample Architectural</td><td>L3.A3</td></tr>
                                        <tr><td>9</td><td>455</td><td>Snowdon Towers Sample Architectural</td><td>L3A2</td></tr>
                                        <tr><td>10</td><td>165</td><td>Snowdon Towers Sample Architectural</td><td>L4.A1</td></tr>
                                    </tbody>
                                </table>
                            </div>
                        </section>

                        <section class="panel legend-panel">
                            <div class="legend">
                                <div class="legend-head">
                                    <h2>Legend</h2>
                                    <button class="icon-btn" aria-label="Search legend"><svg width="16" height="16" viewBox="0 0 24 24" fill="none" stroke="currentColor" stroke-width="2.2"><circle cx="9.5" cy="9.5" r="6"/><path d="M14 14l7 7"/></svg></button>
                                </div>
                                <ul>
                                    <li><span class="swatch yellow"></span>L1.A1</li>
                                    <li><span class="swatch blue"></span>L1.A2</li>
                                    <li><span class="swatch orange"></span>L1.A3</li>
                                    <li><span class="swatch blue"></span>L2.A1</li>
                                    <li><span class="swatch green"></span>L2.A3</li>
                                    <li><span class="swatch slate"></span>L2A2</li>
                                    <li><span class="swatch orange"></span>L3.A1</li>
                                    <li><span class="swatch red"></span>L3.A3</li>
                                </ul>
                            </div>
                        </section>

                        <section class="panel chart-panel">
                            <div class="chart-head">
                                <div class="chart-types">
                                    <button class="on" aria-label="Donut"><svg width="16" height="16" viewBox="0 0 16 16" fill="none" stroke="currentColor" stroke-width="2"><circle cx="8" cy="8" r="6" pathLength="40" stroke-dasharray="8 2" stroke-dashoffset="-1"/></svg></button>
                                    <button aria-label="Bars"><svg width="14" height="14" viewBox="0 0 14 14"><path d="M1 2h12v2H1zM1 6h9v2H1zM1 10h5v2H1z"/></svg></button>
                                    <button aria-label="Columns"><svg width="14" height="14" viewBox="0 0 14 14"><path d="M1 5h3v8H1zM6 1h2v12H6zM10 9h3v4h-3z"/></svg></button>
                                    <button aria-label="Area"><svg width="16" height="14" viewBox="0 0 16 14"><path d="M2 13V9l3-2 4 4 5-3v5zM2 3l3 2 4-4 5 5H14v1l-5 3-4-4-3 2 2-3z"/></svg></button>
                                    <button aria-label="Line"><svg width="16" height="12" viewBox="0 0 16 12" fill="none" stroke="currentColor" stroke-width="2"><path d="M2 9l4-5 4 4 5-5"/><circle cx="2" cy="9" r="1"/></svg></button>
                                </div>
                                <span class="divider"></span>
                                <span class="select field chart-field">
                                    <label for="value">Value</label>
                                    <select id="value"><option>Element Count</option></select>
                                </span>
                                <b class="by">by</b>
                                <span class="select field chart-field">
                                    <label for="group">Group</label>
                                    <select id="group"><option>Control Zone</option></select>
                                </span>
                            </div>
                            <div class="chart">
                                <!-- ring circles carry pathLength 6220, one unit per element -->
                                <svg viewBox="0 0 708 293" role="img" aria-label="Elements by control zone">
                                    <g transform="translate(354 141) scale(1 -1)" fill="none">
                                        <circle r="51" stroke="#fff" stroke-width="21"/>
                                        <g class="ring">
                                            <circle r="51" pathLength="6220" class="yellow" stroke-dasharray="200 6020" stroke-dashoffset="-18"/>
                                            <circle r="51" pathLength="6220" class="blue" stroke-dasharray="478 5742" stroke-dashoffset="-253"/>
                                            <circle r="51" pathLength="6220" class="orange" stroke-dasharray="402 5818" stroke-dashoffset="-766"/>
                                            <circle r="51" pathLength="6220" class="blue" stroke-dasharray="195 6025" stroke-dashoffset="-1203"/>
                                            <circle r="51" pathLength="6220" class="green" stroke-dasharray="159 6061" stroke-dashoffset="-1433"/>
                                            <circle r="51" pathLength="6220" class="slate" stroke-dasharray="471 5749" stroke-dashoffset="-1627"/>
                                            <circle r="51" pathLength="6220" class="orange" stroke-dasharray="157 6063" stroke-dashoffset="-2133"/>
                                            <circle r="51" pathLength="6220" class="red" stroke-dasharray="292 5928" stroke-dashoffset="-2325"/>
                                            <circle r="51" pathLength="6220" class="amber" stroke-dasharray="420 5800" stroke-dashoffset="-2652"/>
                                            <circle r="51" pathLength="6220" class="green" stroke-dasharray="130 6090" stroke-dashoffset="-3107"/>
                                            <circle r="51" pathLength="6220" class="red" stroke-dasharray="462 5758" stroke-dashoffset="-3272"/>
                                            <circle r="51" pathLength="6220" class="aqua" stroke-dasharray="250 5970" stroke-dashoffset="-3769"/>
                                            <circle r="51" pathLength="6220" class="red" stroke-dasharray="182 6038" stroke-dashoffset="-4054"/>
                                            <circle r="51" pathLength="6220" class="aqua" stroke-dasharray="289 5931" stroke-dashoffset="-4271"/>
                                            <circle r="51" pathLength="6220" class="slate" stroke-dasharray="141 6079" stroke-dashoffset="-4595"/>
                                            <circle r="51" pathLength="6220" class="amber" stroke-dasharray="437 5783" stroke-dashoffset="-4771"/>
                                            <circle r="51" pathLength="6220" class="sand" stroke-dasharray="260 5960" stroke-dashoffset="-5243"/>
                                            <circle r="51" pathLength="6220" class="cyan" stroke-dasharray="199 6021" stroke-dashoffset="-5538"/>
                                            <circle r="51" pathLength="6220" class="teal" stroke-dasharray="431 5789" stroke-dashoffset="-5772"/>
                                        </g>
                                        <g class="ring-outer">
                                            <circle r="69" pathLength="6220" class="blue" stroke-dasharray="503 5717" stroke-dashoffset="-240"/>
                                            <circle r="69" pathLength="6220" class="orange" stroke-dasharray="427 5793" stroke-dashoffset="-753"/>
                                            <circle r="69" pathLength="6220" class="slate" stroke-dasharray="496 5724" stroke-dashoffset="-1614"/>
                                            <circle r="69" pathLength="6220" class="red" stroke-dasharray="317 5903" stroke-dashoffset="-2312"/>
                                            <circle r="69" pathLength="6220" class="amber" stroke-dasharray="445 5775" stroke-dashoffset="-2639"/>
                                            <circle r="69" pathLength="6220" class="red" stroke-dasharray="487 5733" stroke-dashoffset="-3259"/>
                                            <circle r="69" pathLength="6220" class="aqua" stroke-dasharray="314 5906" stroke-dashoffset="-4258"/>
                                            <circle r="69" pathLength="6220" class="amber" stroke-dasharray="462 5758" stroke-dashoffset="-4758"/>
                                            <circle r="69" pathLength="6220" class="teal" stroke-dasharray="456 5764" stroke-dashoffset="-5759"/>
                                        </g>
                                    </g>
                                    <g class="callout orange"><path d="M395 82l13-9h31"/><circle cx="439" cy="73" r="2"/><text x="453" y="73">L1.A3: 7%</text><text x="453" y="91" class="val">437.00</text></g>
                                    <g class="callout blue"><path d="M417 107l19-5h33"/><circle cx="469" cy="102" r="2"/><text x="482" y="102">L1.A2: 8%</text><text x="482" y="120" class="val">513.00</text></g>
                                    <g class="callout teal"><path d="M424 158l22 3h31"/><circle cx="477" cy="161" r="2"/><text x="491" y="161">: 7%</text><text x="491" y="179" class="val">466.00</text></g>
                                    <g class="callout amber"><path d="M377 211l7 9h32"/><circle cx="416" cy="220" r="2"/><text x="430" y="221">R.A1: 8%</text><text x="430" y="239" class="val">472.00</text></g>
                                    <g class="callout aqua left"><path d="M336 212l-6 10h-32"/><circle cx="298" cy="222" r="2"/><text x="285" y="222">L5.A2: 5%</text><text x="285" y="240" class="val">324.00</text></g>
                                    <g class="callout red left"><path d="M287 170l-21 4h-31"/><circle cx="235" cy="174" r="2"/><text x="221" y="174">L4.A2: 8%</text><text x="221" y="193" class="val">497.00</text></g>
                                    <g class="callout amber left"><path d="M283 122l-21-3h-32"/><circle cx="230" cy="119" r="2"/><text x="217" y="119">L3A2: 7%</text><text x="217" y="138" class="val">455.00</text></g>
                                    <g class="callout red left"><path d="M296 97l-17-7h-32"/><circle cx="247" cy="90" r="2"/><text x="233" y="90">L3.A3: 5%</text><text x="233" y="108" class="val">327.00</text></g>
                                    <g class="callout slate left"><path d="M332 72l-6-11h-32"/><circle cx="294" cy="61" r="2"/><text x="280" y="62">L2A2: 8%</text><text x="280" y="80" class="val">506.00</text></g>
                                </svg>
                            </div>
                        </section>
                    </div>
                </div>
            </main>

            <footer class="footer">
                <a href="#">Background tasks</a>
                <span>© 2026 Anker</span>
            </footer>
        </div>
    </div>
</body>

</html>
```
FILE: styles.css
```css
* {
    box-sizing: border-box;
}

html {
    background: #0c1716;
}

body {
    margin: 0;
    height: 100vh;
    display: flex;
    flex-direction: column;
    overflow: hidden;
    background: #eff2f7;
    border-radius: 0 0 16px 16px;
    color: #1d1d1f;
    font-family: "Liberation Sans", Arial, sans-serif;
    font-size: 14px;
}

button, select, input {
    font: inherit;
    color: inherit;
}

button {
    border: 0;
    padding: 0;
    background: none;
}

a {
    color: inherit;
    text-decoration: none;
}

h1, h2, p, ul {
    margin: 0;
    padding: 0;
}

h2 {
    font-size: 14px;
}

svg {
    display: block;
    flex-shrink: 0;
    fill: currentColor;
}

svg[fill="none"] {
    fill: none;
}

.icon-btn {
    display: flex;
    align-items: center;
    justify-content: center;
    color: #555;
}

/* selects */
.select {
    position: relative;
    display: block;
}

.select select {
    appearance: none;
    width: 100%;
    height: 100%;
    border: 1px solid #bcbec2;
    border-radius: 8px;
    background: #fff;
    outline: 0;
}

.select::after {
    content: "";
    position: absolute;
    right: 16px;
    top: 50%;
    margin-top: -2px;
    border: 5px solid transparent;
    border-top-color: #707070;
    border-bottom: 0;
    pointer-events: none;
}

.field label {
    position: absolute;
    z-index: 1;
    color: #555;
}

/* top bar */
.topbar {
    height: 41px;
    flex: none;
    display: grid;
    grid-template-columns: 1fr auto 1fr;
    padding: 0 17px 0 13px;
}

.topbar-side {
    display: flex;
    align-items: center;
    height: 34px;
}

.menu-btn {
    color: #333;
}

.home-link {
    margin-left: 26px;
}

.project-label {
    margin-left: 21px;
    color: #777;
}

.project-select {
    width: 254px;
    height: 34px;
    margin: 0 17px 0 8px;
}

.project-select select {
    border-color: #dcdee2;
    border-radius: 10px;
    padding: 0 14px;
    color: #444;
}

.project-select::after {
    border-top-color: #444;
}

.logo {
    align-self: start;
    color: #303234;
    font: 900 20px/34px "Roboto", sans-serif;
}

.topbar-right {
    justify-content: flex-end;
    gap: 11px;
}

.topbar-right .icon-btn {
    color: #333;
}

.search-btn {
    display: flex;
    align-items: center;
    width: 153px;
    height: 30px;
    padding: 0 4px 0 8px;
    border: 1px solid #d3d6db;
    border-radius: 8px;
    color: #444;
}

.search-btn span {
    margin-left: 8px;
}

.search-btn kbd {
    margin-left: auto;
    width: 32px;
    border: 1px solid #cfd2d7;
    border-radius: 6px;
    font: bold 13px/20px "Liberation Sans", "DejaVu Sans", sans-serif;
}

.banner {
    height: 34px;
    flex: none;
    display: flex;
    align-items: center;
    padding: 0 15px 0 33px;
    background: #dff1f5;
    color: #24474f;
}

.banner p {
    flex: 1;
    font-size: 15px;
    text-align: center;
}

.banner a {
    color: #1b1b1b;
    text-decoration: underline;
}

/* layout */
.layout {
    flex: 1;
    min-height: 0;
    display: flex;
}

.sidebar {
    width: 56px;
    flex: none;
    display: flex;
    flex-direction: column;
    justify-content: space-between;
    color: #444;
}

.sidebar a {
    width: 36px;
    height: 36px;
    margin: 0 8px;
    display: flex;
    align-items: center;
    justify-content: center;
    border-radius: 8px;
}

.nav-main {
    height: 323px;
    margin-top: 13px;
    display: grid;
    grid-auto-rows: 1fr;
    align-items: center;
}

.nav-main .active {
    background: #e5eaf3;
    color: #1b1b1b;
}

.nav-bottom {
    display: grid;
    gap: 4px;
    padding: 18px 0 32px;
    border-top: 1px solid #d8dbe1;
}

.nav-bottom .account {
    border: 1px solid #d0d3d9;
    border-radius: 50%;
    color: #333;
}

.content {
    flex: 1;
    min-width: 0;
    display: flex;
    flex-direction: column;
    padding: 7px 9px 0 0;
}

.workspace {
    flex: 1;
    min-height: 0;
    display: flex;
    flex-direction: column;
    border: 1px solid #dadde2;
    border-radius: 10px;
    overflow: hidden;
}

.page-head {
    height: 50px;
    flex: none;
    display: flex;
    align-items: center;
    padding: 0 12px;
    background: #fff;
    border-bottom: 1px solid #dadde2;
}

.page-head h1 {
    margin-left: 18px;
    font-size: 18px;
}

.expand {
    color: #35c5dc;
}

.view-tools {
    display: flex;
    align-items: center;
    justify-content: space-around;
    width: 175px;
    height: 34px;
    margin-left: auto;
    padding: 0 3px;
    border: 1px solid #d3d6dd;
    border-radius: 8px;
    background: #f0f3f8;
    color: #17aec5;
}

.layout-btn {
    margin-left: 18px;
    color: #666;
}

.more-btn {
    margin-left: 22px;
    color: #333;
}

.panels {
    flex: 1;
    min-height: 0;
    display: grid;
    grid-template-rows: 11fr 9fr;
    gap: 8px;
    padding: 9px;
}

.row {
    display: grid;
    gap: 8px;
    min-height: 0;
}

.row-top {
    grid-template-columns: 1fr 3fr;
}

.row-bottom {
    grid-template-columns: 9fr 3fr 8fr;
}

.panel {
    min-width: 0;
    min-height: 0;
    overflow: hidden;
    border: 1px solid #dfe1e5;
    border-radius: 8px;
    background: #fff;
}

/* breakdown tree */
.breakdown-head {
    display: flex;
    align-items: center;
    height: 57px;
    padding: 0 15px 0 9px;
    background: #eff2f7;
    border-bottom: 1px solid #d3d6db;
}

.breakdown-field {
    flex: 1;
    height: 36px;
}

.breakdown-field label {
    left: 16px;
    top: -8px;
    line-height: 16px;
}

.breakdown-field select {
    padding: 0 9px;
    font-size: 16px;
}

.breakdown-field::after,
.chart-field::after {
    border-width: 6px;
    border-bottom: 0;
    right: 15px;
    margin-top: -3px;
}

.add-btn {
    margin: 0 25px 0 19px;
    color: #17aec5;
}

.breakdown-head .icon-btn:last-child {
    color: #707070;
}

.levels {
    height: 377px;
    margin-top: 9px;
    padding-left: 55px;
    display: grid;
    grid-auto-rows: 1fr;
}

.levels label {
    display: flex;
    align-items: center;
    gap: 4px;
}

.levels input {
    appearance: none;
    width: 17px;
    height: 17px;
    margin: 0 15px 0 0;
    border: 2px solid #1b1b1b;
    border-radius: 2px;
    background: #fff;
}

.levels span {
    color: #888;
}

/* model viewer */
.viewer {
    position: relative;
    overflow: hidden;
    border: 1px solid #d0d4d9;
    border-radius: 8px;
    background:
        radial-gradient(ellipse 50% 50% at 60% 100%, #f1e9e4, transparent),
        radial-gradient(ellipse 50% 80% at 75% 0, #e8f2fe, transparent),
        radial-gradient(ellipse 40% 50% at 5% 45%, #d8deea, transparent),
        linear-gradient(90deg, transparent 40%, #eef0f8 80%),
        linear-gradient(180deg, #d2e3eb, #e0e8f1 50%, #dededc);
}

.scene {
    position: absolute;
    inset: 0;
    width: 100%;
    height: 100%;
}

.round-btn {
    position: absolute;
    display: flex;
    align-items: center;
    justify-content: center;
    width: 32px;
    height: 32px;
    border-radius: 50%;
    background: #f0f3f8;
    color: #666;
}

.collapse-left {
    left: 8px;
    top: 8px;
}

.help-btn {
    left: 11px;
    bottom: 11px;
    width: 36px;
    height: 36px;
    border: 1px solid #cdd0d5;
    background: #f4f5f7;
}

.collapse-down {
    right: 8px;
    bottom: 8px;
}

.viewcube {
    position: absolute;
    right: 13px;
    top: 12px;
    overflow: visible;
}

.compass {
    fill: #b4b8bf;
    font-size: 19px;
    font-weight: bold;
}

.compass-small {
    font-size: 14px;
}

.face {
    fill: #b0b5be;
    font-size: 12px;
    font-weight: bold;
}

.face-left {
    font-size: 10px;
}

.viewer-tools {
    position: absolute;
    left: 50%;
    bottom: 18px;
    transform: translateX(-50%);
    display: flex;
    gap: 11px;
}

.tool-group {
    display: flex;
    height: 56px;
    border-radius: 6px;
    background: #2e2e2e;
    box-shadow: 1px 3px 10px rgba(0, 0, 0, .5);
    color: #f4f4f4;
}

.tool-group button {
    position: relative;
    display: flex;
    align-items: center;
    justify-content: center;
    width: 56px;
}

.tool-group .selected {
    color: #12b5f5;
}

.tool-group .selected::before {
    content: "";
    position: absolute;
    inset: 6px;
    border-radius: 2px;
    box-shadow: inset 0 2px 2px #000;
}

.tool-group i {
    position: absolute;
    right: 7px;
    top: 11px;
    border: 4px solid transparent;
    border-bottom: 8px solid;
    border-top: 0;
}

.status {
    align-items: center;
    padding: 0 18px;
    font: 15px "Open Sans", sans-serif;
    white-space: nowrap;
}

/* table */
.table-panel {
    display: flex;
    flex-direction: column;
    padding: 9px;
}

.table-panel h2 {
    line-height: 20px;
    margin-bottom: 5px;
}

.table-tools {
    display: flex;
    align-items: center;
    gap: 10px;
    height: 37px;
    flex: none;
    padding: 0 27px 0 9px;
    background: #eff2f7;
}

.chip {
    padding: 0 14px;
    border-radius: 6px;
    background: #fff;
    font-size: 13px;
    line-height: 21px;
    color: #333;
}

.table-search {
    display: flex;
    align-items: center;
    width: 180px;
    height: 26px;
    margin-left: auto;
    padding: 0 9px;
    border: 1px solid #bcbfc5;
    border-radius: 6px;
    color: #555;
}

.table-search input {
    width: 100%;
    min-width: 0;
    border: 0;
    padding: 0;
    outline: 0;
    background: none;
    font-size: 13px;
}

.table-search input::placeholder {
    color: #999;
}

.select-all {
    margin-left: 18px;
    font-weight: bold;
    color: #444;
}

.table-wrap {
    flex: 1;
    min-height: 0;
    overflow: hidden;
}

table {
    width: 100%;
    table-layout: fixed;
    border-collapse: collapse;
    border-top: 1px solid #d0d3d8;
}

.col-num {
    width: 88px;
}

.col-count {
    width: 136px;
}

.col-file {
    width: 361px;
}

th, td {
    border: 1px solid #e0e1e4;
    text-align: left;
}

th {
    height: 33px;
    padding: 0 15px 0 5px;
    border-bottom: 2px solid #dadce0;
}

th.num {
    padding-left: 11px;
    color: #777;
    font-weight: normal;
}

td {
    height: 26px;
    padding: 0 9px;
}

td:first-child {
    padding: 0 8px;
    color: #999;
}

td:nth-child(2),
td:nth-child(3) {
    background: linear-gradient(90deg, #f1f1f2, #fff 8px);
}

.th-cell {
    display: flex;
    align-items: center;
}

.sort {
    margin-left: auto;
    fill: none;
    stroke: #555;
}

.dots {
    margin-left: 19px;
    color: #aaa;
}

.tt {
    margin: 0 10px 0 1px;
    fill: none;
    stroke: #666;
    stroke-width: 2;
}

/* legend */
.legend-panel {
    padding: 4px 5px;
}

.legend {
    height: 100%;
    overflow: hidden;
    border: 1px solid #d9dbe0;
    border-radius: 8px;
}

.legend-head {
    display: flex;
    align-items: center;
    gap: 5px;
    height: 39px;
    padding: 0 9px;
    background: #eff2f7;
    border-bottom: 1px solid #d9dbe0;
    color: #444;
}

.legend ul {
    padding: 5px 17px;
    list-style: none;
}

.legend li {
    display: flex;
    align-items: center;
    gap: 9px;
    height: 38px;
}

.swatch {
    width: 14px;
    height: 14px;
    border: 1px solid rgba(0, 0, 0, .1);
    border-radius: 3px;
    background: currentColor;
}

.yellow { color: #efb440; }
.blue { color: #3d8fb5; }
.orange { color: #e89446; }
.green { color: #69a5a2; }
.slate { color: #6b89a8; }
.red { color: #d85360; }
.amber { color: #e6aa50; }
.aqua { color: #90c8c8; }
.sand { color: #dad5d0; }
.cyan { color: #3badca; }
.teal { color: #48a0b8; }

/* chart */
.chart-panel {
    display: flex;
    flex-direction: column;
    padding: 10px 9px 9px;
}

.chart-head {
    display: flex;
    align-items: center;
    height: 33px;
    margin-bottom: 9px;
}

.chart-types {
    display: flex;
    align-items: center;
    justify-content: space-around;
    width: 162px;
    height: 33px;
    border: 1px solid #d3d6dd;
    border-radius: 6px;
    background: #eff2f7;
    color: #707070;
}

.chart-types .on {
    color: #17aec5;
}

.divider {
    width: 1px;
    height: 27px;
    margin: 0 12px 0 13px;
    background: #d5d7db;
}

.chart-field {
    flex: 1;
    height: 31px;
}

.chart-field select {
    padding: 0 8px;
    border-radius: 4px;
    font-size: 16px;
}

.chart-field label {
    left: 9px;
    top: -10px;
    padding: 0 6px;
    background: #fff;
    font-size: 12px;
    line-height: 14px;
}

.by {
    margin: 0 12px;
    font-size: 16px;
    color: #444;
}

.chart {
    flex: 1;
    min-height: 0;
    border-radius: 8px;
    background: #eff2f7;
}

.chart svg {
    width: 100%;
    height: 100%;
}

.ring circle {
    stroke: currentColor;
    stroke-width: 19px;
}

.ring-outer circle {
    stroke: currentColor;
    stroke-width: 2px;
}

.callout path {
    fill: none;
    stroke: currentColor;
}

.callout text {
    font-size: 14px;
    font-weight: bold;
}

.callout .val {
    fill: #666;
    font-size: 13px;
    font-weight: normal;
}

.left text {
    text-anchor: end;
}

.footer {
    display: flex;
    justify-content: flex-end;
    gap: 18px;
    height: 27px;
    flex: none;
    padding-right: 18px;
    font-size: 13px;
    line-height: 27px;
    color: #777;
}
```
